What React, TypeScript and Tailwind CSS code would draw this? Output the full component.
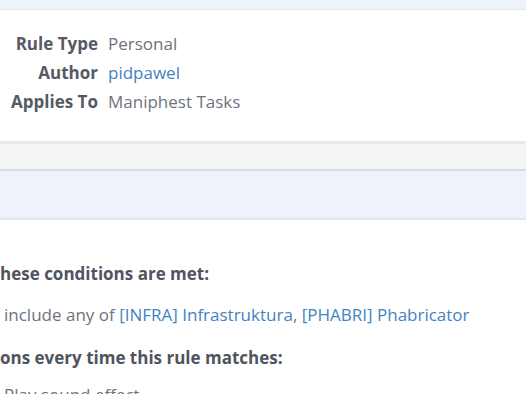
export default function App() {
  const rows = [
    { label: "Rule Type", value: "Personal", link: false },
    { label: "Author", value: "pidpawel", link: true },
    { label: "Applies To", value: "Maniphest Tasks", link: false },
  ];

  return (
    <div
      className="w-[526px] h-[394px] overflow-hidden bg-white text-[17px]"
      style={{ fontFamily: '"Open Sans", "Noto Sans", sans-serif' }}
    >
      <div className="h-[10px] bg-[#edf2fb] border-b border-[#e2e8f2]" />

      <div className="h-[131px] pt-[23px]">
        <div className="grid grid-cols-[98px_1fr] gap-x-[10px] gap-y-[7px] leading-[22px]">
          {rows.map((r) => (
            <div key={r.label} className="contents">
              <div className="text-right font-bold text-[#555a64]">{r.label}</div>
              <div className={r.link ? "text-[#4283c4]" : "text-[#6e737c]"}>{r.value}</div>
            </div>
          ))}
        </div>
      </div>

      <div className="h-[3px] bg-[#e4e9ec]" />
      <div className="h-[27px] bg-[#f3f4f5] border-b-2 border-[#d5dde8]" />
      <div className="h-[49px] bg-[#edf2fb] border-b-2 border-[#e1e7f0]" />

      <div className="pt-[43px] leading-[22px]">
        <div className="font-bold text-[#4f5460]">hese conditions are met:</div>
        <div className="mt-[19px] pl-[4px] text-[#6e737c]">
          include any of{" "}
          <span className="text-[#4283c4]">[INFRA] Infrastruktura</span>,{" "}
          <span className="text-[#4283c4]">[PHABRI] Phabricator</span>
        </div>
        <div className="mt-[21px] font-bold text-[#4f5460]">ons every time this rule matches:</div>
        <div className="mt-[15px] pl-[4px] text-[#6e737c]">Play sound effect</div>
      </div>
    </div>
  );
}
